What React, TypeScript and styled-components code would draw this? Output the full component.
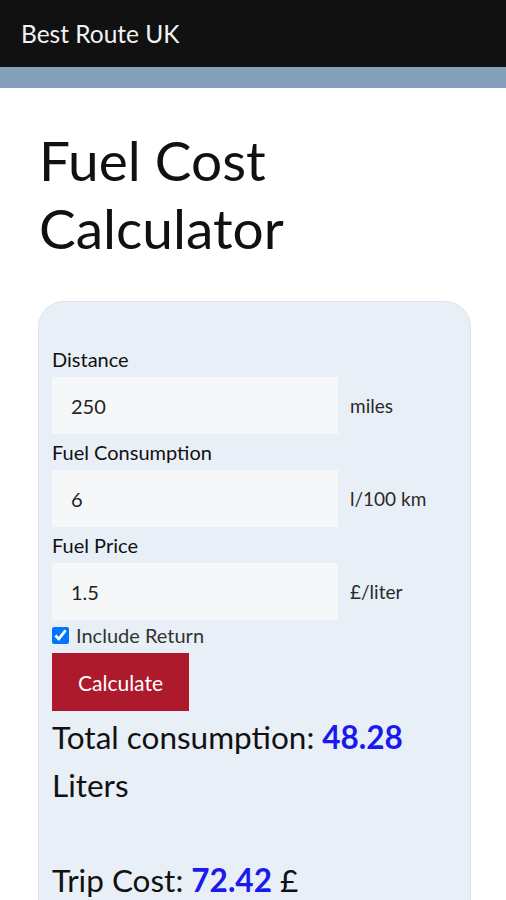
import React, { useState } from 'react';
import styled, { createGlobalStyle } from 'styled-components';

const GlobalStyle = createGlobalStyle`
  body {
    margin: 0;
    background: #ffffff;
    font-family: Lato, "Open Sans", sans-serif;
    color: #111111;
  }
`;

const TopBar = styled.header`
  height: 67px;
  background: #111111;
  display: flex;
  align-items: center;
  padding: 0 21px;
`;

const Brand = styled.span`
  color: #f2f2f2;
  font-size: 24.5px;
`;

const Band = styled.div`
  height: 21px;
  background: #85a0bb;
`;

const Main = styled.main`
  padding: 38px 35px 0 38px;
`;

const Title = styled.h1`
  margin: 0 0 39px 1px;
  font-size: 55px;
  font-weight: 400;
  line-height: 68px;
`;

const Card = styled.section`
  background: #e9eff6;
  border: 1px solid #dde4ec;
  border-radius: 26px;
  padding: 45px 14px 12px 13px;
  min-height: 700px;
`;

const Label = styled.label`
  display: block;
  font-size: 20px;
  line-height: 24px;
`;

const Row = styled.div`
  display: flex;
  align-items: center;
  gap: 12px;
  margin: 6px 0 6px;
`;

const Input = styled.input`
  width: 286px;
  height: 57px;
  box-sizing: border-box;
  border: none;
  background: #f5f7f9;
  padding: 0 19px;
  font-family: inherit;
  font-size: 20px;
  color: #222;
  outline: none;
`;

const Unit = styled.span`
  font-size: 19px;
  color: #2a2a2a;
`;

const CheckRow = styled.label`
  display: flex;
  align-items: center;
  gap: 7px;
  height: 18px;
  font-size: 20px;
  color: #333;
  input {
    margin: 0;
    width: 17px;
    height: 17px;
  }
`;

const Button = styled.button`
  margin-top: 9px;
  width: 137px;
  height: 58px;
  border: none;
  background: #ac1a2c;
  color: #fff;
  font-family: inherit;
  font-size: 21px;
`;

const Result = styled.p<{ $gap?: number }>`
  margin: ${p => p.$gap ?? 2}px 0 0;
  font-size: 31.5px;
  line-height: 48px;
`;

const Value = styled.strong`
  color: #1a1aee;
  font-weight: 700;
`;

export default function App() {
  const [distance, setDistance] = useState('250');
  const [consumption, setConsumption] = useState('6');
  const [price, setPrice] = useState('1.5');
  const [ret, setRet] = useState(true);

  return (
    <>
      <GlobalStyle />
      <TopBar>
        <Brand>Best Route UK</Brand>
      </TopBar>
      <Band />
      <Main>
        <Title>Fuel Cost Calculator</Title>
        <Card>
          <Label>Distance</Label>
          <Row>
            <Input value={distance} onChange={e => setDistance(e.target.value)} />
            <Unit>miles</Unit>
          </Row>
          <Label>Fuel Consumption</Label>
          <Row>
            <Input value={consumption} onChange={e => setConsumption(e.target.value)} />
            <Unit>l/100 km</Unit>
          </Row>
          <Label>Fuel Price</Label>
          <Row>
            <Input value={price} onChange={e => setPrice(e.target.value)} />
            <Unit>£/liter</Unit>
          </Row>
          <CheckRow>
            <input type="checkbox" checked={ret} onChange={e => setRet(e.target.checked)} />
            Include Return
          </CheckRow>
          <Button>Calculate</Button>
          <Result>
            Total consumption: <Value>48.28</Value> Liters
          </Result>
          <Result $gap={47}>
            Trip Cost: <Value>72.42</Value> £
          </Result>
        </Card>
      </Main>
    </>
  );
}
